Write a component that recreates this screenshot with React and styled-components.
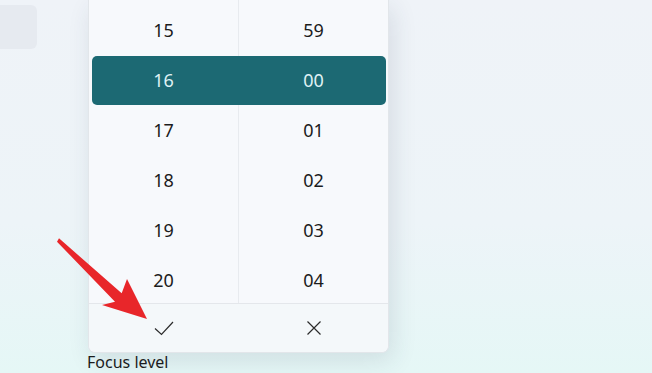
import React from 'react';
import styled, { createGlobalStyle } from 'styled-components';

const GlobalStyle = createGlobalStyle`
  html, body {
    margin: 0;
    padding: 0;
  }
  body {
    font-family: "Noto Sans", "Open Sans", sans-serif;
    background: linear-gradient(180deg, #eff3f8 0%, #edf4f8 60%, #e5f7f6 100%);
    overflow: hidden;
  }
`;

const Page = styled.div`
  position: relative;
  width: 652px;
  height: 373px;
  overflow: hidden;
`;

const Backdrop = styled.div`
  display: flex;
  flex-direction: column;
  height: 100%;
  padding-top: 5px;
  box-sizing: border-box;
`;

const Tile = styled.div`
  width: 37px;
  height: 44px;
  background: #e6eaf0;
  border-radius: 0 6px 6px 0;
`;

const FieldLabel = styled.div`
  margin-top: auto;
  margin-left: 87px;
  margin-bottom: 1px;
  font-size: 16px;
  line-height: 20px;
  color: #1b1b1b;
`;

const Flyout = styled.div`
  position: absolute;
  left: 88px;
  top: 0;
  width: 301px;
  height: 353px;
  display: flex;
  flex-direction: column;
  background: #f7f9fc;
  border: 1px solid #e2e6ea;
  border-top: none;
  border-radius: 0 0 7px 7px;
  box-sizing: border-box;
  box-shadow: 4px 8px 24px rgba(40, 60, 80, 0.12);
`;

const Columns = styled.div`
  position: relative;
  height: 303px;
  flex: none;
  display: grid;
  grid-template-columns: 149px 1fr;
  overflow: hidden;
`;

const Column = styled.div`
  display: flex;
  flex-direction: column;
  padding-top: 5px;
  border-left: ${(p) => (p.$divider ? '1px solid #e8ebef' : 'none')};
`;

const Cell = styled.div`
  height: 50px;
  flex: none;
  display: flex;
  align-items: center;
  justify-content: center;
  font-size: 18px;
  color: ${(p) => (p.$active ? '#dff1f3' : '#1c1c1c')};
  position: relative;
  z-index: 1;
`;

const Highlight = styled.div`
  position: absolute;
  left: 3px;
  right: 2px;
  top: 56px;
  height: 49px;
  background: #1c6973;
  border-radius: 5px;
`;

const Footer = styled.div`
  flex: 1;
  display: grid;
  grid-template-columns: 150px 1fr;
  border-top: 1px solid #e4e7eb;
  background: #f4f8fa;
  border-radius: 0 0 7px 7px;
`;

const FooterButton = styled.div`
  display: flex;
  align-items: center;
  justify-content: center;
  color: #2b2b2b;
`;

const Arrow = styled.svg`
  position: absolute;
  left: 0;
  top: 0;
  pointer-events: none;
`;

const hours = ['15', '16', '17', '18', '19', '20'];
const minutes = ['59', '00', '01', '02', '03', '04'];

export default function App() {
  return (
    <Page>
      <GlobalStyle />
      <Backdrop>
        <Tile />
        <FieldLabel>Focus level</FieldLabel>
      </Backdrop>
      <Flyout>
        <Columns>
          <Highlight />
          <Column>
            {hours.map((h) => (
              <Cell key={h} $active={h === '16'}>{h}</Cell>
            ))}
          </Column>
          <Column $divider>
            {minutes.map((m) => (
              <Cell key={m} $active={m === '00'}>{m}</Cell>
            ))}
          </Column>
        </Columns>
        <Footer>
          <FooterButton>
            <svg width="22" height="18" viewBox="0 0 22 18">
              <path d="M2 9.5 L8.5 15.5 L20 3" fill="none" stroke="#2b2b2b" strokeWidth="1.2" />
            </svg>
          </FooterButton>
          <FooterButton>
            <svg width="16" height="16" viewBox="0 0 16 16">
              <path d="M1.5 1.5 L14.5 14.5 M14.5 1.5 L1.5 14.5" fill="none" stroke="#2b2b2b" strokeWidth="1.2" />
            </svg>
          </FooterButton>
        </Footer>
      </Flyout>
      <Arrow width="652" height="373" viewBox="0 0 652 373">
        <polygon
          points="59,238.3 121.7,293.3 127,279 147,319 102,305 115,301.7 57,241.7"
          fill="#e8262a"
        />
      </Arrow>
    </Page>
  );
}
